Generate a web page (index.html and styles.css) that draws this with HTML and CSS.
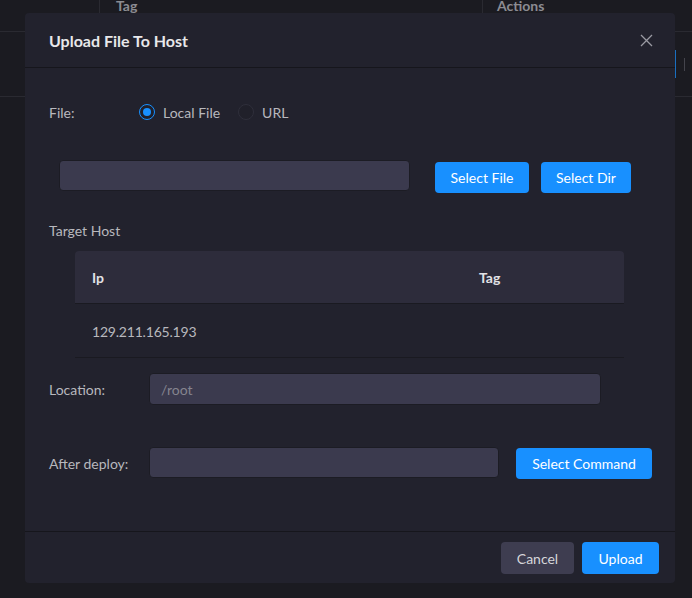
FILE: index.html
```html
<!DOCTYPE html>
<html>
<head>
<meta charset="utf-8">
<link rel="stylesheet" href="styles.css">
</head>
<body>
<div class="page">
  <div class="bg-head">
    <div class="bg-cell c1"></div>
    <div class="bg-cell c2">Tag</div>
    <div class="bg-cell c3">Actions</div>
  </div>
  <div class="bg-row">
    <div class="bg-focus"></div>
    <div class="bg-tick"></div>
  </div>
</div>

<div class="modal">
  <div class="modal-header">
    <div class="modal-title">Upload File To Host</div>
    <div class="modal-close">
      <svg width="13" height="13" viewBox="0 0 13 13"><path d="M1 1 L12 12 M12 1 L1 12" stroke="#9a9aa2" stroke-width="1.3" fill="none"/></svg>
    </div>
  </div>
  <div class="modal-body">
    <div class="row file-row">
      <div class="label">File:</div>
      <div class="radios">
        <span class="radio checked"><span class="dot"></span></span><span class="radio-text">Local File</span>
        <span class="radio"></span><span class="radio-text">URL</span>
      </div>
    </div>
    <div class="row pick-row">
      <div class="input file-input"></div>
      <button class="btn primary sel-file">Select File</button>
      <button class="btn primary sel-dir">Select Dir</button>
    </div>
    <div class="section-label">Target Host</div>
    <div class="table">
      <div class="thead">
        <div class="th ip">Ip</div>
        <div class="th tag">Tag</div>
      </div>
      <div class="trow">
        <div class="td ip">129.211.165.193</div>
        <div class="td tag"></div>
      </div>
    </div>
    <div class="row loc-row">
      <div class="label wide">Location:</div>
      <div class="input loc-input"><span class="ph">/root</span></div>
    </div>
    <div class="row deploy-row">
      <div class="label wide">After deploy:</div>
      <div class="input deploy-input"></div>
      <button class="btn primary cmd">Select Command</button>
    </div>
  </div>
  <div class="modal-footer">
    <button class="btn secondary">Cancel</button>
    <button class="btn primary">Upload</button>
  </div>
</div>
</body>
</html>
```
FILE: styles.css
```css
* { box-sizing: border-box; }
html, body {
  margin: 0;
  padding: 0;
  width: 692px;
  height: 598px;
  overflow: hidden;
  background: #1b1b21;
  font-family: Lato, "Noto Sans", "Liberation Sans", sans-serif;
  font-size: 14px;
  color: #b8b8bd;
}
.page { position: relative; width: 692px; height: 598px; }
.bg-head {
  display: flex;
  height: 32px;
  border-bottom: 1px solid #2a2a31;
}
.bg-cell {
  color: #8c8c92;
  font-weight: 700;
  font-size: 14px;
  line-height: 12px;
}
.bg-cell.c1 { width: 100px; border-right: 1px solid #2a2a31; }
.bg-cell.c2 { width: 383px; padding-left: 16px; border-right: 1px solid #2a2a31; }
.bg-cell.c3 { flex: 1; padding-left: 14px; }
.bg-row {
  height: 65px;
  border-bottom: 1px solid #2a2a31;
  position: relative;
}
.bg-focus {
  position: absolute;
  left: 675px; top: 18px;
  width: 1px; height: 28px;
  background: #1a6fc0;
}
.bg-tick {
  position: absolute;
  left: 684px; top: 26px;
  width: 1px; height: 13px;
  background: #44444c;
}

.modal {
  position: absolute;
  left: 25px;
  top: 13px;
  width: 650px;
  height: 570px;
  background: #22222d;
  border-radius: 4px;
  display: flex;
  flex-direction: column;
}
.modal-header {
  height: 55px;
  border-bottom: 1px solid #16161c;
  display: flex;
  align-items: center;
  justify-content: space-between;
  padding: 0 22px 0 24px;
}
.modal-title {
  font-weight: 700;
  font-size: 16px;
  color: #e8e8ea;
}
.modal-close { display: flex; width: 13px; height: 13px; margin-top: 1px; }

.modal-body {
  flex: 1;
  padding: 0 24px;
  display: flex;
  flex-direction: column;
}
.row { display: flex; align-items: center; }
.label { width: 90px; color: #b8b8bd; flex-shrink: 0; }
.label.wide { width: 100px; }
.file-row { margin-top: 28px; height: 32px; }
.radios { display: flex; align-items: center; }
.radio {
  width: 16px; height: 16px;
  border-radius: 50%;
  border: 1px solid #2f2f3b;
  background: #20202a;
  display: inline-flex;
  align-items: center;
  justify-content: center;
}
.radio.checked { border: 1.5px solid #1890ff; }
.radio .dot { width: 8px; height: 8px; border-radius: 50%; background: #1890ff; }
.radio-text { margin: 0 18px 0 8px; color: #b8b8bd; }

.pick-row { margin-top: 32px; align-items: flex-start; height: 33px; padding-left: 10px; }
.input {
  height: 32px;
  background: #3b3a4e;
  border: 1px solid #1c1c24;
  border-radius: 4px;
  display: flex;
  align-items: center;
  padding: 0 11px;
  flex-shrink: 0;
}
.file-input { width: 351px; height: 31px; }
.ph { color: #85848f; }

.btn {
  font-family: inherit;
  font-size: 14px;
  border: 0;
  border-radius: 4px;
  height: 32px;
  padding: 0 15px;
  color: #ffffff;
  cursor: pointer;
  flex-shrink: 0;
}
.btn.primary { background: #1890ff; }
.btn.secondary { background: #3e3d50; color: #d6d6da; }
.sel-file { margin-left: 25px; margin-top: 2px; height: 31px; width: 94px; padding: 0; }
.sel-dir { margin-left: 12px; margin-top: 2px; height: 31px; width: 90px; padding: 0; }

.section-label { margin-top: 27px; line-height: 22px; color: #b8b8bd; }
.table { margin: 9px 27px 0 26px; }
.thead {
  display: flex;
  height: 53px;
  align-items: center;
  background: #2d2c3b;
  border-radius: 4px 4px 0 0;
  border-bottom: 1px solid #1a1a21;
}
.th { font-weight: 700; color: #e2e2e6; }
.th.ip, .td.ip { width: 404px; padding-left: 17px; }
.trow {
  display: flex;
  height: 54px;
  align-items: center;
  padding-top: 2px;
  border-bottom: 1px solid #1a1a21;
}
.td { color: #b8b8bd; letter-spacing: -0.2px; }

.loc-row { margin-top: 15px; }
.loc-input { width: 452px; }
.deploy-row { margin-top: 42px; align-items: flex-start; }
.deploy-input { width: 350px; height: 31px; }
.cmd { margin-left: 17px; width: 136px; height: 31px; padding: 0; margin-top: 1px; }
.deploy-row .label { align-self: center; }

.modal-footer {
  height: 52px;
  border-top: 1px solid #16161c;
  display: flex;
  justify-content: flex-end;
  align-items: flex-start;
  padding: 10px 16px 0 0;
  gap: 8px;
}
.modal-footer .secondary { width: 73px; padding: 0; }
.modal-footer .primary { width: 77px; padding: 0; }
```
